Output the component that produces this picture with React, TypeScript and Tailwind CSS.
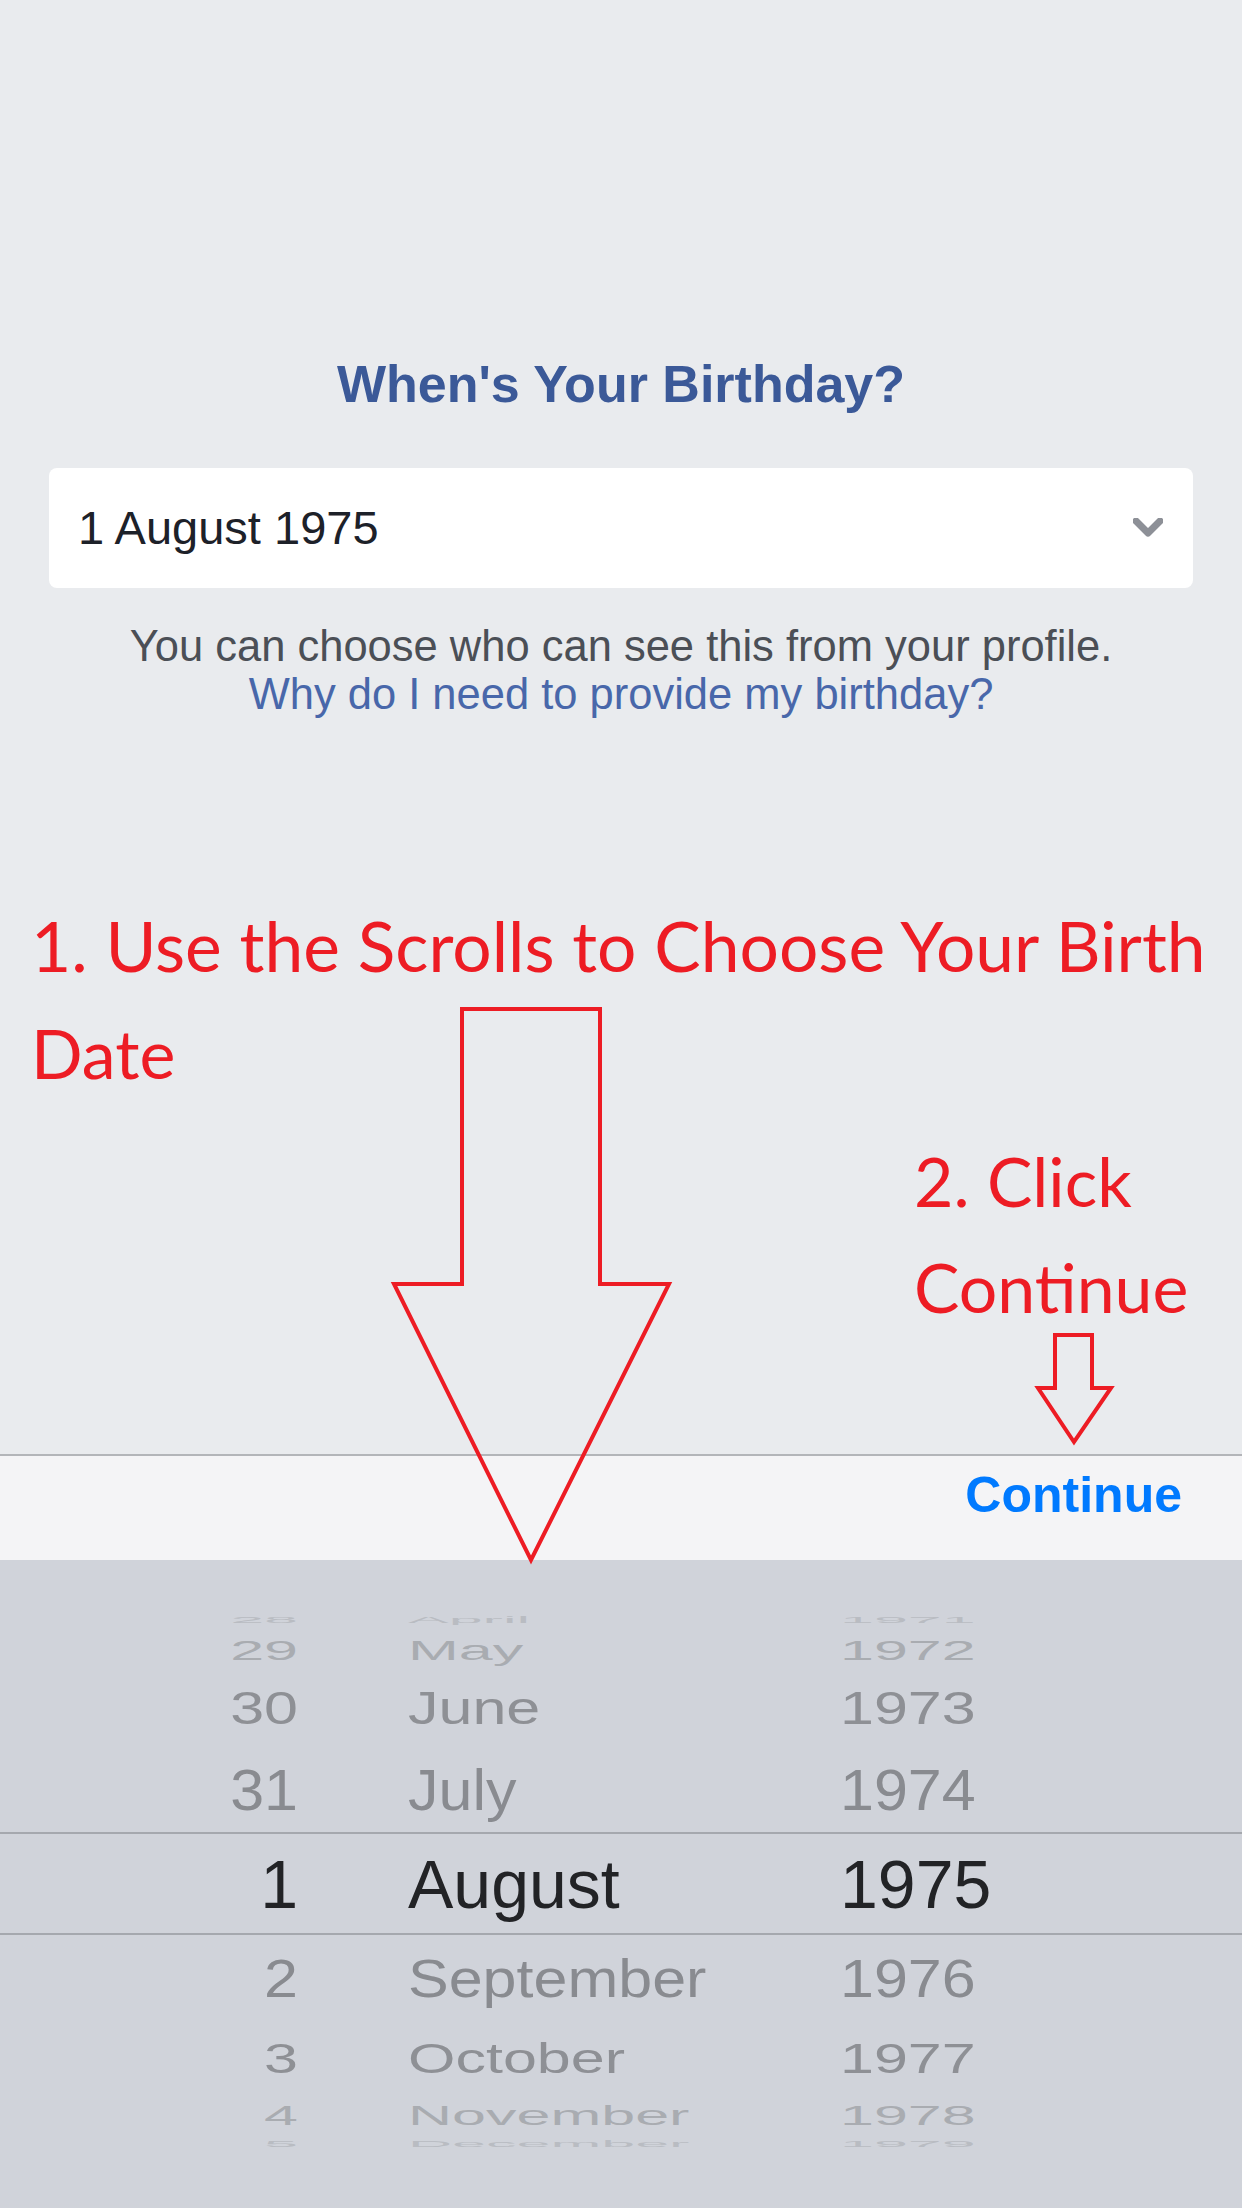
import React from "react";

type Row = {
  day: string;
  month: string;
  year: string;
  h: number;
  scale: number;
  tone: string;
  big?: boolean;
};

const rows: Row[] = [
  { day: "28", month: "April", year: "1971", h: 28, scale: 0.15, tone: "text-[#b9bcc2]" },
  { day: "29", month: "May", year: "1972", h: 34, scale: 0.46, tone: "text-[#a9acb1]" },
  { day: "30", month: "June", year: "1973", h: 82, scale: 0.77, tone: "text-[#8e9095]" },
  { day: "31", month: "July", year: "1974", h: 83, scale: 0.93, tone: "text-[#898b90]" },
  { day: "1", month: "August", year: "1975", h: 103, scale: 1, tone: "text-[#222326]", big: true },
  { day: "2", month: "September", year: "1976", h: 86, scale: 0.89, tone: "text-[#898b90]" },
  { day: "3", month: "October", year: "1977", h: 74, scale: 0.7, tone: "text-[#8e9095]" },
  { day: "4", month: "November", year: "1978", h: 40, scale: 0.46, tone: "text-[#a9acb1]" },
  { day: "5", month: "December", year: "1979", h: 16, scale: 0.15, tone: "text-[#b9bcc2]" },
];

function PickerRow({ row }: { row: Row }) {
  return (
    <div
      className={
        row.big
          ? "flex items-center border-y-2 border-[#a5a8ae] w-full"
          : "flex items-center w-full"
      }
      style={{ height: row.h }}
    >
      <div
        className={`flex w-full items-center leading-none ${row.tone} ${
          row.big ? "text-[68px]" : "text-[61px]"
        }`}
        style={{ transform: `scaleY(${row.scale})` }}
      >
        <div className="w-[298px] text-right">{row.day}</div>
        <div className="w-[542px] pl-[110px]">{row.month}</div>
        <div className="flex-1">{row.year}</div>
      </div>
    </div>
  );
}

export default function App() {
  return (
    <div className="relative w-[1242px] h-[2208px] bg-[#e9ebee] flex flex-col overflow-hidden font-['Liberation_Sans',Arial,sans-serif]">
      <div className="flex-1 flex flex-col pt-[354px]">
        <h1 className="text-center text-[52px] leading-[60px] font-bold text-[#3b5998]">
          When's Your Birthday?
        </h1>

        <div className="mx-[49px] mt-[54px] h-[120px] bg-white rounded-[8px] flex items-center justify-between pl-[29px] pr-[30px]">
          <span className="text-[47px] text-[#1d2129]">1 August 1975</span>
          <svg width="30" height="20" viewBox="0 0 30 20">
            <path
              d="M3 3 L15 15 L27 3"
              fill="none"
              stroke="#8d9097"
              strokeWidth="7"
              strokeLinecap="round"
              strokeLinejoin="round"
            />
          </svg>
        </div>

        <div className="mt-[34px] text-center text-[43.5px] leading-[48px]">
          <div className="text-[#4b4f56]">
            You can choose who can see this from your profile.
          </div>
          <div className="text-[#4867aa]">Why do I need to provide my birthday?</div>
        </div>

        <div className="mt-[174px] pl-[31px] font-['Lato','Open_Sans',sans-serif] leading-[107px] text-[#ed1c24]">
          <div className="text-[69.5px]">1. Use the Scrolls to Choose Your Birth</div>
          <div className="text-[68px]">Date</div>
        </div>

        <div className="mt-[22px] pl-[914px] font-['Lato','Open_Sans',sans-serif] text-[68px] leading-[106px] text-[#ed1c24]">
          2. Click
          <br />
          Continue
        </div>
      </div>

      <div className="h-[106px] border-t-2 border-[#b3b5b9] bg-[#f4f4f6] flex justify-end items-start pt-[14px] pr-[60px]">
        <button className="text-[50px] leading-none font-bold text-[#007aff]">
          Continue
        </button>
      </div>

      <div className="h-[648px] bg-[#d0d3da] flex flex-col pt-[45px]">
        {rows.map((r) => (
          <PickerRow key={r.day} row={r} />
        ))}
      </div>

      <svg
        className="absolute inset-0 pointer-events-none"
        width="1242"
        height="2208"
        viewBox="0 0 1242 2208"
      >
        <polygon
          points="462,1009 600,1009 600,1284 669,1284 531,1560 394,1284 462,1284"
          fill="none"
          stroke="#ed1c24"
          strokeWidth="4"
          strokeLinejoin="miter"
        />
        <polygon
          points="1055,1335 1092,1335 1092,1388 1111,1388 1074,1442 1038,1388 1055,1388"
          fill="none"
          stroke="#ed1c24"
          strokeWidth="4"
          strokeLinejoin="miter"
        />
      </svg>
    </div>
  );
}
